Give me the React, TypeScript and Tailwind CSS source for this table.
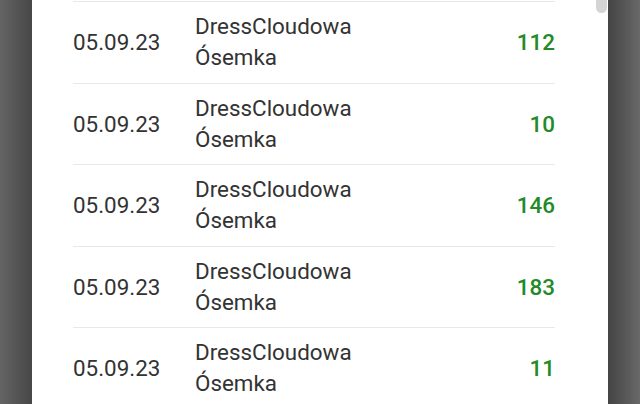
const rows = [
  { date: "05.09.23", name: "DressCloudowa", sub: "Ósemka", qty: 112 },
  { date: "05.09.23", name: "DressCloudowa", sub: "Ósemka", qty: 10 },
  { date: "05.09.23", name: "DressCloudowa", sub: "Ósemka", qty: 146 },
  { date: "05.09.23", name: "DressCloudowa", sub: "Ósemka", qty: 183 },
  { date: "05.09.23", name: "DressCloudowa", sub: "Ósemka", qty: 11 },
];

export default function App() {
  return (
    <div
      className="flex h-[404px] w-[640px] overflow-hidden bg-[#555]"
      style={{ fontFamily: "Roboto, 'Liberation Sans', sans-serif" }}
    >
      <div className="w-[32px] shrink-0 bg-gradient-to-r from-[#646464] to-[#474747]" />

      <div className="relative flex-1 overflow-hidden bg-white">
        {/* scrollbar thumb */}
        <div className="absolute right-[1px] top-[-20px] h-[33px] w-[11px] rounded-full bg-[#d4d4d4]" />

        <div className="pl-[41px] pr-[53px] pt-[1px]">
          {rows.map((r, i) => (
            <div
              key={i}
              className="flex h-[81.5px] items-center border-t border-[#e8e8e8] text-[22.4px] text-[#333]"
            >
              <div className="w-[122px] shrink-0 leading-none">{r.date}</div>
              <div className="flex-1 leading-[31px]">
                <div>{r.name}</div>
                <div>{r.sub}</div>
              </div>
              <div className="font-medium leading-none text-[#228a26]">{r.qty}</div>
            </div>
          ))}
        </div>
      </div>

      <div className="w-[32px] shrink-0 bg-gradient-to-r from-[#444] to-[#696969]" />
    </div>
  );
}
